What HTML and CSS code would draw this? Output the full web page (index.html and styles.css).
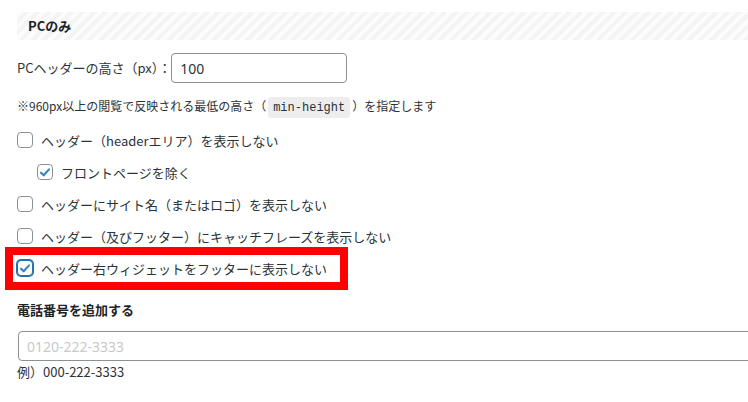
FILE: index.html
```html
<!DOCTYPE html>
<html lang="ja">
<head>
    <meta charset="UTF-8">
    <meta name="viewport" content="width=device-width, initial-scale=1.0">
    <title>ヘッダー設定</title>
    <link rel="stylesheet" href="styles.css">
</head>
<body>
    <div class="settings">
        <div class="section-head">PCのみ</div>

        <div class="field-row">
            <label class="field-label" for="headerHeight">PCヘッダーの高さ（px）：</label>
            <input class="text-input small" id="headerHeight" type="text" value="100">
        </div>

        <p class="note">※960px以上の閲覧で反映される最低の高さ（<code>min-height</code>）を指定します</p>

        <div class="check-list">
            <label class="check-row">
                <span class="checkbox"></span>
                <span>ヘッダー（headerエリア）を表示しない</span>
            </label>
            <label class="check-row indent">
                <span class="checkbox checked">
                    <svg viewBox="0 0 16 16"><path d="M3.4 8.2 6.5 11.2 12.6 4.4"/></svg>
                </span>
                <span>フロントページを除く</span>
            </label>
            <label class="check-row">
                <span class="checkbox"></span>
                <span>ヘッダーにサイト名（またはロゴ）を表示しない</span>
            </label>
            <label class="check-row">
                <span class="checkbox"></span>
                <span>ヘッダー（及びフッター）にキャッチフレーズを表示しない</span>
            </label>
            <div class="check-row">
                <label class="highlight">
                    <span class="checkbox checked focused">
                        <svg viewBox="0 0 16 16"><path d="M3.4 8.2 6.5 11.2 12.6 4.4"/></svg>
                    </span>
                    <span>ヘッダー右ウィジェットをフッターに表示しない</span>
                </label>
            </div>
        </div>

        <h4 class="field-title">電話番号を追加する</h4>
        <input class="text-input wide" type="text" placeholder="0120-222-3333">
        <p class="example">例）000-222-3333</p>
    </div>
</body>
</html>
```

FILE: styles.css
```css
* {
    margin: 0;
    padding: 0;
    box-sizing: border-box;
}

body {
    font-family: "Noto Sans CJK JP", "Noto Sans", sans-serif;
    font-size: 13px;
    color: #2c3338;
    background: #fff;
    overflow: hidden;
}

.settings {
    padding: 12px 0 0 17px;
    overflow: hidden;
}

.section-head {
    height: 28px;
    line-height: 28px;
    padding-left: 11px;
    font-weight: bold;
    color: #1d2327;
    background: repeating-linear-gradient(-45deg, #f4f4f4 0 4px, #fcfcfc 4px 8px);
}

.field-row {
    display: flex;
    align-items: center;
    margin-top: 13px;
}

.field-label {
    line-height: 20px;
}

.text-input {
    height: 30px;
    border: 1px solid #8c8f94;
    border-radius: 4px;
    padding: 0 8px;
    font-family: "Noto Sans", "Noto Sans CJK JP", sans-serif;
    font-size: 14px;
    color: #2c3338;
    background: #fff;
    outline: none;
}

.text-input::placeholder {
    color: #c8c9cc;
}

.text-input.small {
    width: 176px;
}

.text-input.wide {
    display: block;
    width: 760px;
    margin-top: 11px;
    margin-left: 1px;
}

.note {
    margin-top: 13px;
    font-size: 12px;
    line-height: 20px;
}

.note code {
    font-family: "Liberation Mono", monospace;
    font-size: 12px;
    line-height: 1;
    padding: 4px 5px 3px;
    margin: 0 2px;
    background: rgba(0, 0, 0, 0.07);
    border-radius: 3px;
}

.check-list {
    margin-top: 8px;
}

.check-row {
    display: flex;
    align-items: center;
    height: 32px;
    gap: 8px;
}

.check-row.indent {
    padding-left: 20px;
}

.checkbox {
    width: 16px;
    height: 16px;
    flex: none;
    border: 1px solid #8c8f94;
    border-radius: 4px;
    background: #fff;
    display: flex;
    align-items: center;
    justify-content: center;
}

.checkbox svg {
    width: 15px;
    height: 15px;
}

.checkbox path {
    fill: none;
    stroke: #3582c4;
    stroke-width: 2.4;
    stroke-linecap: round;
    stroke-linejoin: round;
}

.checkbox.focused {
    border-color: #2271b1;
    box-shadow: 0 0 0 1px #2271b1;
}

.highlight {
    display: flex;
    align-items: center;
    gap: 8px;
    height: 27px;
    margin-left: -4px;
    padding: 0 13px 0 4px;
    outline: 8px solid #ff0000;
}

.field-title {
    margin-top: 16px;
    font-size: 13px;
    line-height: 20px;
    font-weight: bold;
    color: #1d2327;
}

.example {
    margin-top: 1px;
    line-height: 20px;
}
```
